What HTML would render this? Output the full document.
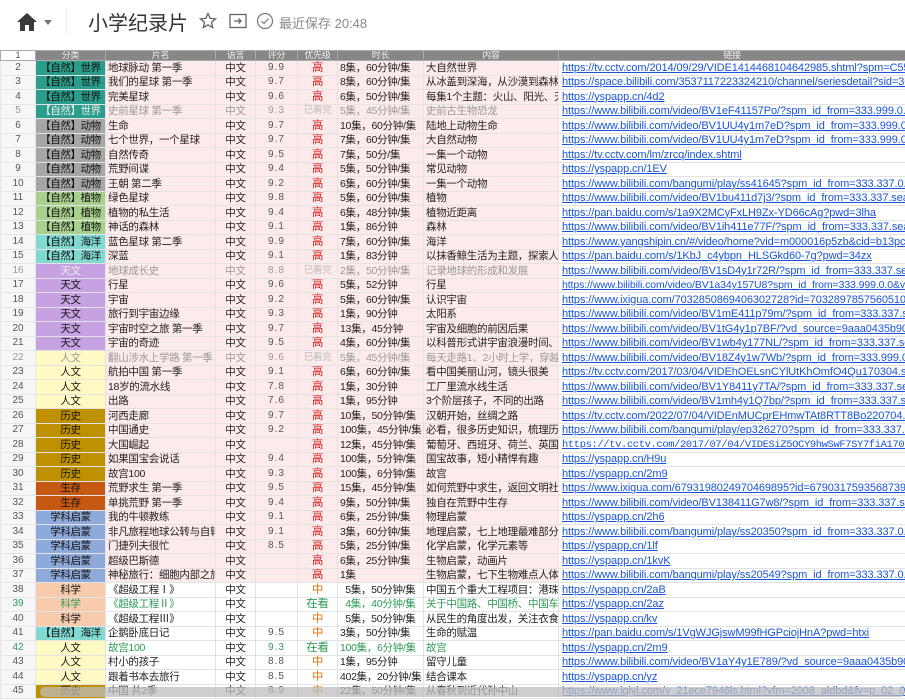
<!DOCTYPE html>
<html><head><meta charset="utf-8">
<style>
*{margin:0;padding:0;box-sizing:border-box}
body{width:905px;height:700px;overflow:hidden;background:#fff;font-family:"Liberation Sans","Noto Sans CJK SC",sans-serif;position:relative}
.top{position:absolute;left:0;top:0;width:905px;height:46px;background:#fff}
.title{position:absolute;left:88px;top:7px;font-size:20px;color:#333}
.saved{position:absolute;left:279px;top:13px;font-size:13px;color:#8a8a8a}
table{position:absolute;left:0;top:50px;border-collapse:collapse;table-layout:fixed;width:905px}
td{height:14.5px;border:1px solid #e3e3e3;font-size:10.5px;line-height:12px;white-space:nowrap;overflow:hidden;padding:0 2px;color:#222;background:#fdeaea;letter-spacing:-0.3px}
tr.h td{height:10px;background:#878787;color:#eee;font-size:9px;line-height:9px;text-align:center;border-color:#aaa}
td.n{background:#f7f7f9;color:#555;text-align:center;font-size:10px;border-color:#e6e6e6;letter-spacing:0}
tr.h td.n{background:#fff;color:#555}
td.c{text-align:center}
td.l{background:#fff;color:#1a55d6;text-decoration:underline;font-size:11px;padding-left:3px;letter-spacing:-0.1px}
td.r{text-align:center;color:#555;font-size:10px;letter-spacing:1px}
td.p{text-align:center;color:#d62020;font-size:11.5px}
td.cat{text-align:center;font-size:10.5px;color:#111;padding:0;letter-spacing:-0.4px}
.w td{background:#fff}
.w td.n{background:#f7f7f9}
.g td{color:#999}
.g td.p{color:#bbb;font-size:9.5px}
.g td.l{color:#1a55d6}
.gr td{color:#2e9a55}
.gr td.l{color:#1a55d6}
td.m{color:#e07a10}
td.gp{color:#2e9a55}
.sj{background:#2a9d8c!important}
.dw{background:#a6a6a6!important}
.zw{background:#a9d18e!important}
.hy{background:#80dad2!important}
.tw{background:#c6a2e2!important}
.rw{background:#fff9c4!important}
.ls{background:#bf9000!important}
.sc{background:#c65911!important}
.xk{background:#8eaadb!important}
.kx{background:#f8cbad!important}
.g td.cat{color:#eee}
.g td.rw{color:#999}
</style></head><body>
<div class="top">
<svg style="position:absolute;left:16px;top:12px" width="22" height="20" viewBox="0 0 22 20"><path d="M11 1 L21 10 L18 10 L18 19 L13 19 L13 13 L9 13 L9 19 L4 19 L4 10 L1 10 Z" fill="#3a3a3a"/></svg>
<svg style="position:absolute;left:44px;top:20px" width="8" height="5"><path d="M0 0 L8 0 L4 5 Z" fill="#777"/></svg>
<div style="position:absolute;left:66px;top:10px;width:1px;height:24px;background:#eee"></div>
<div class="title">小学纪录片</div>
<svg style="position:absolute;left:199px;top:12px" width="18" height="18" viewBox="0 0 18 18"><path d="M9 1.5 L11.2 6.4 L16.5 6.9 L12.5 10.4 L13.7 15.6 L9 12.9 L4.3 15.6 L5.5 10.4 L1.5 6.9 L6.8 6.4 Z" fill="none" stroke="#666" stroke-width="1.3"/></svg>
<svg style="position:absolute;left:229px;top:13px" width="18" height="16" viewBox="0 0 18 16"><rect x="1" y="1.5" width="16" height="13" fill="none" stroke="#666" stroke-width="1.3"/><path d="M5 8 H12 M9.5 5.5 L12 8 L9.5 10.5" fill="none" stroke="#666" stroke-width="1.3"/></svg>
<svg style="position:absolute;left:256px;top:12px" width="18" height="18" viewBox="0 0 18 18"><circle cx="9" cy="9" r="7.5" fill="none" stroke="#777" stroke-width="1.2"/><path d="M5.5 9 L8 11.5 L12.5 6.5" fill="none" stroke="#777" stroke-width="1.2"/></svg>
<div class="saved">最近保存 20:48</div>
</div>
<table>
<colgroup><col style="width:35px"><col style="width:70px"><col style="width:110px"><col style="width:40px"><col style="width:42px"><col style="width:40px"><col style="width:86px"><col style="width:135px"><col style="width:347px"></colgroup>
<tr class="h"><td class="n">1</td><td>分类</td><td>片名</td><td>语言</td><td>评分</td><td>优先级</td><td>时长</td><td>内容</td><td>链接</td></tr>
<tr><td class="n">2</td><td class="cat sj">【自然】世界</td><td>地球脉动 第一季</td><td class="c">中文</td><td class="r">9.9</td><td class="p">高</td><td>8集，60分钟/集</td><td>大自然世界</td><td class="l">https://tv.cctv.com/2014/09/29/VIDE1414468104642985.shtml?spm=C55</td></tr>
<tr><td class="n">3</td><td class="cat sj">【自然】世界</td><td>我们的星球 第一季</td><td class="c">中文</td><td class="r">9.7</td><td class="p">高</td><td>8集，60分钟/集</td><td>从冰盖到深海，从沙漠到森林</td><td class="l">https://space.bilibili.com/3537117223324210/channel/seriesdetail?sid=36</td></tr>
<tr><td class="n">4</td><td class="cat sj">【自然】世界</td><td>完美星球</td><td class="c">中文</td><td class="r">9.6</td><td class="p">高</td><td>6集，50分钟/集</td><td>每集1个主题：火山、阳光、天气</td><td class="l">https://yspapp.cn/4d2</td></tr>
<tr class="g"><td class="n">5</td><td class="cat sj">【自然】世界</td><td>史前星球 第一季</td><td class="c">中文</td><td class="r">9.3</td><td class="p">已看完</td><td>5集，45分钟/集</td><td>史前古生物恐龙</td><td class="l">https://www.bilibili.com/video/BV1eF41157Po/?spm_id_from=333.999.0.0</td></tr>
<tr><td class="n">6</td><td class="cat dw">【自然】动物</td><td>生命</td><td class="c">中文</td><td class="r">9.7</td><td class="p">高</td><td>10集，60分钟/集</td><td>陆地上动物生命</td><td class="l">https://www.bilibili.com/video/BV1UU4y1m7eD?spm_id_from=333.999.0.0&amp;vd_s</td></tr>
<tr><td class="n">7</td><td class="cat dw">【自然】动物</td><td>七个世界，一个星球</td><td class="c">中文</td><td class="r">9.7</td><td class="p">高</td><td>7集，60分钟/集</td><td>大自然动物</td><td class="l">https://www.bilibili.com/video/BV1UU4y1m7eD?spm_id_from=333.999.0.0&amp;vd_s</td></tr>
<tr><td class="n">8</td><td class="cat dw">【自然】动物</td><td>自然传奇</td><td class="c">中文</td><td class="r">9.5</td><td class="p">高</td><td>7集，50分/集</td><td>一集一个动物</td><td class="l">https://tv.cctv.com/lm/zrcq/index.shtml</td></tr>
<tr><td class="n">9</td><td class="cat dw">【自然】动物</td><td>荒野间谍</td><td class="c">中文</td><td class="r">9.4</td><td class="p">高</td><td>5集，50分钟/集</td><td>常见动物</td><td class="l">https://yspapp.cn/1EV</td></tr>
<tr><td class="n">10</td><td class="cat dw">【自然】动物</td><td>王朝 第二季</td><td class="c">中文</td><td class="r">9.2</td><td class="p">高</td><td>6集，60分钟/集</td><td>一集一个动物</td><td class="l">https://www.bilibili.com/bangumi/play/ss41645?spm_id_from=333.337.0.0</td></tr>
<tr><td class="n">11</td><td class="cat zw">【自然】植物</td><td>绿色星球</td><td class="c">中文</td><td class="r">9.8</td><td class="p">高</td><td>5集，60分钟/集</td><td>植物</td><td class="l">https://www.bilibili.com/video/BV1bu411d7j3/?spm_id_from=333.337.search</td></tr>
<tr><td class="n">12</td><td class="cat zw">【自然】植物</td><td>植物的私生活</td><td class="c">中文</td><td class="r">9.4</td><td class="p">高</td><td>6集，48分钟/集</td><td>植物近距离</td><td class="l">https://pan.baidu.com/s/1a9X2MCyFxLH9Zx-YD66cAg?pwd=3lha</td></tr>
<tr><td class="n">13</td><td class="cat zw">【自然】植物</td><td>神话的森林</td><td class="c">中文</td><td class="r">9.1</td><td class="p">高</td><td>1集，86分钟</td><td>森林</td><td class="l">https://www.bilibili.com/video/BV1ih411e77F/?spm_id_from=333.337.search</td></tr>
<tr><td class="n">14</td><td class="cat hy">【自然】海洋</td><td>蓝色星球 第二季</td><td class="c">中文</td><td class="r">9.9</td><td class="p">高</td><td>7集，60分钟/集</td><td>海洋</td><td class="l">https://www.yangshipin.cn/#/video/home?vid=m000016p5zb&amp;cid=b13pc8</td></tr>
<tr><td class="n">15</td><td class="cat hy">【自然】海洋</td><td>深蓝</td><td class="c">中文</td><td class="r">9.1</td><td class="p">高</td><td>1集，83分钟</td><td>以抹香鲸生活为主题，探索人类</td><td class="l">https://pan.baidu.com/s/1KbJ_c4ybpn_HLSGkd60-7g?pwd=34zx</td></tr>
<tr class="g"><td class="n">16</td><td class="cat tw">天文</td><td>地球成长史</td><td class="c">中文</td><td class="r">8.8</td><td class="p">已看完</td><td>2集，50分钟/集</td><td>记录地球的形成和发展</td><td class="l">https://www.bilibili.com/video/BV1sD4y1r72R/?spm_id_from=333.337.sea</td></tr>
<tr><td class="n">17</td><td class="cat tw">天文</td><td>行星</td><td class="c">中文</td><td class="r">9.6</td><td class="p">高</td><td>5集，52分钟</td><td>行星</td><td class="l" style="font-size:10.5px">https://www.bilibili.com/video/BV1a34y157U8?spm_id_from=333.999.0.0&amp;vd_so</td></tr>
<tr><td class="n">18</td><td class="cat tw">天文</td><td>宇宙</td><td class="c">中文</td><td class="r">9.2</td><td class="p">高</td><td>5集，60分钟/集</td><td>认识宇宙</td><td class="l">https://www.ixigua.com/7032850869406302728?id=70328978575605109</td></tr>
<tr><td class="n">19</td><td class="cat tw">天文</td><td>旅行到宇宙边缘</td><td class="c">中文</td><td class="r">9.3</td><td class="p">高</td><td>1集，90分钟</td><td>太阳系</td><td class="l">https://www.bilibili.com/video/BV1mE411p79m/?spm_id_from=333.337.se</td></tr>
<tr><td class="n">20</td><td class="cat tw">天文</td><td>宇宙时空之旅 第一季</td><td class="c">中文</td><td class="r">9.7</td><td class="p">高</td><td>13集，45分钟</td><td>宇宙及细胞的前因后果</td><td class="l">https://www.bilibili.com/video/BV1tG4y1p7BF/?vd_source=9aaa0435b907</td></tr>
<tr><td class="n">21</td><td class="cat tw">天文</td><td>宇宙的奇迹</td><td class="c">中文</td><td class="r">9.5</td><td class="p">高</td><td>4集，60分钟/集</td><td>以科普形式讲宇宙浪漫时间、重</td><td class="l">https://www.bilibili.com/video/BV1wb4y177NL/?spm_id_from=333.337.se</td></tr>
<tr class="g"><td class="n">22</td><td class="cat rw">人文</td><td>翻山涉水上学路 第一季</td><td class="c">中文</td><td class="r">9.6</td><td class="p">已看完</td><td>5集，45分钟/集</td><td>每天走路1、2小时上学，穿越山</td><td class="l">https://www.bilibili.com/video/BV18Z4y1w7Wb/?spm_id_from=333.999.0.</td></tr>
<tr><td class="n">23</td><td class="cat rw">人文</td><td>航拍中国 第一季</td><td class="c">中文</td><td class="r">9.1</td><td class="p">高</td><td>6集，60分钟/集</td><td>看中国美丽山河，镜头很美</td><td class="l">https://tv.cctv.com/2017/03/04/VIDEhOELsnCYlUtKhOmfO4Qu170304.sh</td></tr>
<tr><td class="n">24</td><td class="cat rw">人文</td><td>18岁的流水线</td><td class="c">中文</td><td class="r">7.8</td><td class="p">高</td><td>1集，30分钟</td><td>工厂里流水线生活</td><td class="l">https://www.bilibili.com/video/BV1Y8411y7TA/?spm_id_from=333.337.sea</td></tr>
<tr><td class="n">25</td><td class="cat rw">人文</td><td>出路</td><td class="c">中文</td><td class="r">7.6</td><td class="p">高</td><td>1集，95分钟</td><td>3个阶层孩子，不同的出路</td><td class="l">https://www.bilibili.com/video/BV1mh4y1Q7bp/?spm_id_from=333.337.se</td></tr>
<tr><td class="n">26</td><td class="cat ls">历史</td><td>河西走廊</td><td class="c">中文</td><td class="r">9.7</td><td class="p">高</td><td>10集，50分钟/集</td><td>汉朝开始，丝绸之路</td><td class="l">https://tv.cctv.com/2022/07/04/VIDEnMUCprEHmwTAt8RTT8Bo220704.s</td></tr>
<tr><td class="n">27</td><td class="cat ls">历史</td><td>中国通史</td><td class="c">中文</td><td class="r">9.2</td><td class="p">高</td><td>100集，45分钟/集</td><td>必看，很多历史知识，梳理历史</td><td class="l">https://www.bilibili.com/bangumi/play/ep326270?spm_id_from=333.337.0</td></tr>
<tr><td class="n">28</td><td class="cat ls">历史</td><td>大国崛起</td><td class="c">中文</td><td class="r"></td><td class="p">高</td><td>12集，45分钟/集</td><td>葡萄牙、西班牙、荷兰、英国、</td><td class="l" style="font-family:'Liberation Mono',monospace;font-size:10.5px;letter-spacing:-0.4px">https://tv.cctv.com/2017/07/04/VIDESiZ5OCY9hwSwF7SY7fiA1707</td></tr>
<tr><td class="n">29</td><td class="cat ls">历史</td><td>如果国宝会说话</td><td class="c">中文</td><td class="r">9.4</td><td class="p">高</td><td>100集，5分钟/集</td><td>国宝故事，短小精悍有趣</td><td class="l">https://yspapp.cn/H9u</td></tr>
<tr><td class="n">30</td><td class="cat ls">历史</td><td>故宫100</td><td class="c">中文</td><td class="r">9.3</td><td class="p">高</td><td>100集，6分钟/集</td><td>故宫</td><td class="l">https://yspapp.cn/2m9</td></tr>
<tr><td class="n">31</td><td class="cat sc">生存</td><td>荒野求生 第一季</td><td class="c">中文</td><td class="r">9.5</td><td class="p">高</td><td>15集，45分钟/集</td><td>如何荒野中求生，返回文明社会</td><td class="l">https://www.ixigua.com/6793198024970469895?id=67903175935687398</td></tr>
<tr><td class="n">32</td><td class="cat sc">生存</td><td>单挑荒野 第一季</td><td class="c">中文</td><td class="r">9.4</td><td class="p">高</td><td>9集，50分钟/集</td><td>独自在荒野中生存</td><td class="l">https://www.bilibili.com/video/BV138411G7w8/?spm_id_from=333.337.se</td></tr>
<tr><td class="n">33</td><td class="cat xk">学科启蒙</td><td>我的牛顿教练</td><td class="c">中文</td><td class="r">9.1</td><td class="p">高</td><td>6集，25分钟/集</td><td>物理启蒙</td><td class="l">https://yspapp.cn/2h6</td></tr>
<tr><td class="n">34</td><td class="cat xk">学科启蒙</td><td>非凡旅程地球公转与自转</td><td class="c">中文</td><td class="r">9.1</td><td class="p">高</td><td>3集，60分钟/集</td><td>地理启蒙，七上地理最难部分</td><td class="l">https://www.bilibili.com/bangumi/play/ss20350?spm_id_from=333.337.0.0</td></tr>
<tr><td class="n">35</td><td class="cat xk">学科启蒙</td><td>门捷列夫很忙</td><td class="c">中文</td><td class="r">8.5</td><td class="p">高</td><td>5集，25分钟/集</td><td>化学启蒙，化学元素等</td><td class="l">https://yspapp.cn/1lf</td></tr>
<tr><td class="n">36</td><td class="cat xk">学科启蒙</td><td>超级巴斯德</td><td class="c">中文</td><td class="r"></td><td class="p">高</td><td>6集，25分钟/集</td><td>生物启蒙，动画片</td><td class="l">https://yspapp.cn/1kvK</td></tr>
<tr><td class="n">37</td><td class="cat xk">学科启蒙</td><td>神秘旅行：细胞内部之旅</td><td class="c">中文</td><td class="r"></td><td class="p">高</td><td>1集</td><td>生物启蒙，七下生物难点人体器</td><td class="l">https://www.bilibili.com/bangumi/play/ss20549?spm_id_from=333.337.0.0</td></tr>
<tr class="w"><td class="n">38</td><td class="cat kx">科学</td><td>《超级工程Ⅰ》</td><td class="c">中文</td><td class="r"></td><td class="p m">中</td><td>&nbsp;&nbsp;5集，50分钟/集</td><td>中国五个重大工程项目：港珠澳</td><td class="l">https://yspapp.cn/2aB</td></tr>
<tr class="w gr"><td class="n">39</td><td class="cat kx">科学</td><td>《超级工程Ⅱ》</td><td class="c" style="color:#222">中文</td><td class="r"></td><td class="p gp">在看</td><td>&nbsp;&nbsp;4集，40分钟/集</td><td>关于中国路、中国桥、中国车、</td><td class="l">https://yspapp.cn/2az</td></tr>
<tr class="w"><td class="n">40</td><td class="cat kx">科学</td><td>《超级工程Ⅲ》</td><td class="c">中文</td><td class="r"></td><td class="p m">中</td><td>&nbsp;&nbsp;5集，50分钟/集</td><td>从民生的角度出发，关注衣食住</td><td class="l">https://yspapp.cn/kv</td></tr>
<tr class="w"><td class="n">41</td><td class="cat hy">【自然】海洋</td><td>企鹅卧底日记</td><td class="c">中文</td><td class="r">9.5</td><td class="p m">中</td><td>3集，50分钟/集</td><td>生命的赋温</td><td class="l">https://pan.baidu.com/s/1VgWJGjswM99fHGPciojHnA?pwd=htxi</td></tr>
<tr class="w gr"><td class="n">42</td><td class="cat rw" style="color:#111">人文</td><td>故宫100</td><td class="c" style="color:#222">中文</td><td class="r" style="color:#2e9a55">9.3</td><td class="p gp">在看</td><td>100集，6分钟/集</td><td>故宫</td><td class="l">https://yspapp.cn/2m9</td></tr>
<tr class="w"><td class="n">43</td><td class="cat rw">人文</td><td>村小的孩子</td><td class="c">中文</td><td class="r">8.8</td><td class="p m">中</td><td>1集，95分钟</td><td>留守儿童</td><td class="l">https://www.bilibili.com/video/BV1aY4y1E789/?vd_source=9aaa0435b907</td></tr>
<tr class="w"><td class="n">44</td><td class="cat rw">人文</td><td>跟着书本去旅行</td><td class="c">中文</td><td class="r">8.5</td><td class="p m">中</td><td>402集，20分钟/集</td><td>结合课本</td><td class="l">https://yspapp.cn/yz</td></tr>
<tr class="w"><td class="n">45</td><td class="cat ls">历史</td><td>中国 共2季</td><td class="c">中文</td><td class="r">8.9</td><td class="p m">中</td><td>22集，50分钟/集</td><td>从春秋到近代孙中山</td><td class="l">https://www.iqiyi.com/v_21ece7946ls.html?vfm=2008_aldbd&amp;fv=p_02_01</td></tr>
</table>
<div style="position:absolute;left:40px;top:687px;width:865px;height:10px;background:rgba(190,190,190,0.75);border-radius:5px"></div>
</body></html>
